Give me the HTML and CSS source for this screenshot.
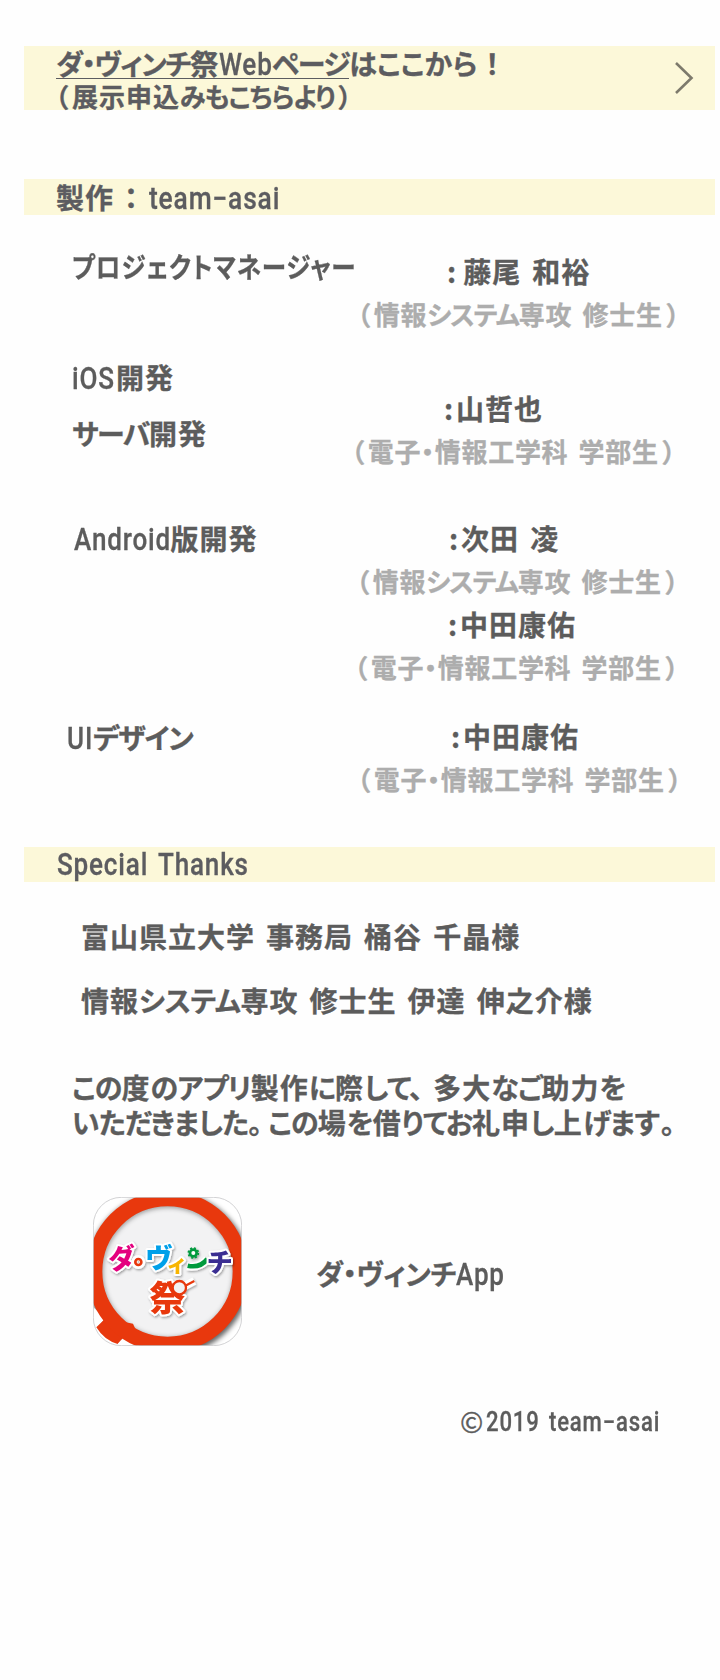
FILE: index.html
```html
<!DOCTYPE html>
<html lang="ja">
<head>
<meta charset="utf-8">
<title>ダ・ヴィンチApp</title>
<link rel="stylesheet" href="styles.css">
</head>
<body>
<main class="page">
  <a class="bar bar-link" href="#">
    <span class="bar-lines">
      <span class="line"><span class="t"><span class="site"><span class="k">ダ・ヴィンチ</span>祭<span class="lat web">Web</span><span class="k">ページ</span></span><span class="here">はここから</span><span class="bang">！</span></span></span>
      <span class="line small"><span class="t"><span class="po">（</span>展示申込<span class="k">みもこちらより</span><span class="pc">）</span></span></span>
    </span>
    <svg class="chevron" viewBox="0 0 20 34" width="20" height="34"><path d="M2 2 L17.500 17 L2 32"/></svg>
  </a>

  <h2 class="bar bar-team"><span class="t">製作<span class="wide-colon">：</span></span><span class="t lat team">team−asai</span></h2>

  <section class="credits">
    <div class="row row-pm">
      <div class="role"><span class="t manager">プロジェクトマネージャー</span></div>
      <div class="people">
        <p class="name n1"><span class="t"><span class="colon">:</span> 藤尾 和裕</span></p>
        <p class="dept d1"><span class="t"><span class="po">（</span>情報<span class="k">システム</span>専攻 修士生<span class="pc">）</span></span></p>
      </div>
    </div>
    <div class="row row-ios">
      <div class="role"><span class="t"><span class="lat ios">iOS</span>開発</span><span class="t"><span class="k">サーバ</span>開発</span></div>
      <div class="people">
        <p class="name n2"><span class="t"><span class="colon">:</span>山哲也</span></p>
        <p class="dept d2"><span class="t"><span class="po">（</span>電子・情報工学科 学部生<span class="pc">）</span></span></p>
      </div>
    </div>
    <div class="row row-android">
      <div class="role"><span class="t role-android"><span class="lat android">Android</span>版開発</span></div>
      <div class="people">
        <p class="name n3"><span class="t"><span class="colon">:</span>次田 凌</span></p>
        <p class="dept d3"><span class="t"><span class="po">（</span>情報<span class="k">システム</span>専攻 修士生<span class="pc">）</span></span></p>
        <p class="name n4"><span class="t"><span class="colon">:</span>中田康佑</span></p>
        <p class="dept d4"><span class="t"><span class="po">（</span>電子・情報工学科 学部生<span class="pc">）</span></span></p>
      </div>
    </div>
    <div class="row row-ui">
      <div class="role"><span class="t role-ui"><span class="lat ui">UI</span><span class="k">デザイン</span></span></div>
      <div class="people">
        <p class="name n5"><span class="t"><span class="colon">:</span>中田康佑</span></p>
        <p class="dept d5"><span class="t"><span class="po">（</span>電子・情報工学科 学部生<span class="pc">）</span></span></p>
      </div>
    </div>
  </section>

  <h2 class="bar bar-thanks"><span class="t lat special">Special Thanks</span></h2>

  <section class="thanks">
    <p><span class="t">富山県立大学 事務局 桶谷 千晶様</span></p>
    <p><span class="t">情報<span class="k-loose">システム</span>専攻 修士生 伊達 伸之介様</span></p>
  </section>

  <section class="note">
    <p><span class="t"><span class="k">この</span>度<span class="k">のアプリ</span>製作<span class="k">に</span>際<span class="k">して<span class="stop">、</span></span>多大<span class="k">なご</span>助力<span class="k">を</span></span></p>
    <p><span class="t"><span class="k">いただきました<span class="stop full">。</span>この</span>場<span class="k">を</span>借<span class="k">りてお</span>礼申<span class="k">し</span>上<span class="k">げます<span class="last">。</span></span></span></p>
  </section>

  <section class="app">
    <svg class="app-icon" viewBox="0 0 447 447" width="149" height="149">
      <defs>
        <clipPath id="tile"><rect x="1" y="1" width="445" height="445" rx="84"/></clipPath>
        <filter id="soft" x="-20%" y="-20%" width="140%" height="140%"><feGaussianBlur stdDeviation="8"/></filter>
        <filter id="drop" x="-20%" y="-20%" width="140%" height="140%"><feDropShadow dx="3" dy="4" stdDeviation="3" flood-color="#000" flood-opacity=".35"/></filter>
      </defs>
      <g clip-path="url(#tile)">
        <rect width="447" height="447" fill="#fff"/>
        <circle cx="227" cy="230" r="222" fill="none" stroke="#000" stroke-opacity=".6" stroke-width="48" filter="url(#soft)"/>
        <circle cx="223" cy="223" r="200" fill="#f2f2f3"/>
        <circle cx="225" cy="227" r="203" fill="none" stroke="#000" stroke-opacity=".45" stroke-width="14" filter="url(#soft)"/>
        <path d="M0 330 L38 364 L8 394 Q34 432 80 447 L0 447 Z" fill="#fff"/>
        <path d="M38 364 L10 391 Q34 430 74 441 L92 421 L150 447 L120 380 Z" fill="#e8380d"/>
        <path d="M92 421 L74 441 L80 447 L140 447 Z" fill="#fff"/>
        <circle cx="223.500" cy="223.500" r="219" fill="none" stroke="#e8380d" stroke-width="47"/>
      </g>
      <g class="logo" filter="url(#drop)">
        <text x="45" y="214" font-size="82" fill="#e4007f" transform="rotate(-5 85 180)">ダ</text>
        <circle class="halo" cx="136" cy="195" r="9"/>
        <circle cx="136" cy="195" r="9" fill="none" stroke="#e8380d" stroke-width="8"/>
        <text x="157" y="213" font-size="82" fill="#00a0e9">ヴ</text>
        <text x="223" y="224" font-size="64" fill="#f8b500">ィ</text>
        <path class="halo" d="M282 208 Q322 214 343 186 M304 166 h1"/>
        <path d="M284 206 Q322 214 343 186" fill="none" stroke="#009a3e" stroke-width="14"/>
        <circle cx="301" cy="168" r="10" fill="#fff" stroke="#009a3e" stroke-width="8"/>
        <circle cx="301" cy="168" r="15" fill="none" stroke="#009a3e" stroke-width="5" stroke-dasharray="6 5.781"/>
        <text x="344" y="224" font-size="78" fill="#3a2f92">チ</text>
        <text x="170" y="341" font-size="106" fill="#e8380d">祭</text>
        <path class="halo" d="M277 266 L304 252"/>
        <circle cx="259" cy="272" r="20" fill="#f2f2f3" stroke="#e8380d" stroke-width="7"/>
        <path d="M277 266 L304 252" stroke="#e8380d" stroke-width="7"/>
      </g>
      <rect x="1" y="1" width="445" height="445" rx="84" fill="none" stroke="#c9c9cb" stroke-width="2.500"/>
    </svg>
    <span class="t app-name"><span class="k-loose">ダ・ヴィンチ</span><span class="lat app-lat">App</span></span>
  </section>

  <footer class="copy"><span class="t copy-mark">©</span><span class="t lat copy-text">2019 team−asai</span></footer>
</main>
</body>
</html>
```
FILE: styles.css
```css
* { box-sizing: border-box; }
body, p, h2 { margin: 0; }
body {
  background: #fefefe;
  color: #5c5c5c;
  font: 700 28px/43px "Noto Sans CJK JP", sans-serif;
  font-feature-settings: "palt";
  letter-spacing: 1px;
  word-spacing: 3.7px;
  -webkit-text-stroke: 0.3px;
}
.page { width: 720px; height: 1680px; padding-top: 46px; overflow: hidden; }
.t { display: inline-block; white-space: pre; transform-origin: 0 50%; }

/* kana runs are set tighter than kanji */
.k { letter-spacing: -1.4px; }
.k-loose { letter-spacing: -0.4px; }
.po { margin-right: 3px; }
.pc { margin-left: 4px; }
.colon { margin-right: 2px; }
.n1 .colon { margin-right: -5px; }
.stop { margin-right: 11px; }
.full { margin-right: 7px; }
.last { margin-left: 2px; }
.here { letter-spacing: .2px; }
.bang { margin-left: 8px; }
.wide-colon { margin: 0 -3px 0 3px; }

.lat {
  display: inline-block;
  font-family: Roboto, sans-serif;
  font-weight: 500;
  font-size: 31px;
  line-height: 1;
  transform: scaleX(.84);
  transform-origin: 0 50%;
}
.web { margin-right: -11px; }
.ios { margin-right: -7px; }
.android { margin-right: -19px; }
.ui { margin-right: -5px; }
.app-lat { margin-right: -9px; }

.bar {
  display: flex;
  margin-left: 24px;
  width: 691px;
  background: #fcf8d9;
  color: #5c5c60;
  font-size: 28px;
  font-weight: 700;
  text-decoration: none;
}
.bar-link { height: 64px; justify-content: space-between; padding: 0 21px 0 32px; }
.bar-lines { display: flex; flex-direction: column; }
.line { display: block; height: 34px; line-height: 34px; }
.site { display: inline-block; height: 33px; border-bottom: 1.5px solid #5c5c60; }
.small { font-size: 26px; margin-top: -1px; }
.small .t { margin-left: -1px; }
.small .k { letter-spacing: -.9px; }
.chevron { margin-top: 15px; fill: none; stroke: #7d7a6c; stroke-width: 2.6; }
.bar-team { height: 36px; margin-top: 69px; padding-left: 32px; line-height: 37px; font-feature-settings: normal; }
.team { margin-left: 6px; line-height: 39px; transform: scaleX(.85); }
.bar-thanks { height: 35px; margin-top: 47px; padding-left: 33px; }
.special { line-height: 36px; }

.credits { padding-top: 30px; }
.row { display: flex; }
.role { display: flex; flex-direction: column; align-items: flex-start; width: 354px; padding-left: 72px; flex: none; }
.row-pm { height: 91px; }
.row-pm .people { padding-top: 4px; }
.row-ios { height: 124px; margin-top: 13px; }
.row-ios .role { line-height: 56px; }
.row-ios .people { padding-top: 37px; }
.row-android { height: 172px; margin-top: 44px; }
.row-ui { height: 85px; margin-top: 26px; }
.row-android .people, .row-ui .people { margin-top: -1px; }
.manager { transform: scaleX(.877); }
.role-android { margin-left: 2px; }
.role-ui { margin: 1px 0 0 -5px; }
.name { padding-top: 1px; }
.n1 { padding-left: 93px; }
.n2 { padding-left: 90px; }
.n3 { padding-left: 95px; }
.n4 { padding-left: 94px; }
.n5 { padding-left: 97px; }
.dept { font-size: 26px; line-height: 41px; margin-bottom: 1px; color: #adadad; letter-spacing: .7px; }
.dept .k { letter-spacing: -1px; }
.d1, .d5 { padding-left: 3px; }
.d2 { margin-left: -3px; }
.d3 { padding-left: 2px; }

.thanks { padding: 22px 0 0 81px; line-height: 64px; }
.note { padding: 38px 0 0 72px; line-height: 35px; }
.note .k { letter-spacing: -.85px; }
.app { display: flex; align-items: center; padding: 57px 0 0 93px; }
.app-name { margin: 4px 0 0 74px; }
.logo text { font-weight: 900; stroke: #fff; stroke-width: 12px; paint-order: stroke; stroke-linejoin: round; }
.halo { fill: none; stroke: #fff; stroke-width: 24px; }
.copy { display: flex; padding: 54px 0 0 460px; font-size: 28px; }
.copy-mark { width: 26px; font-weight: 400; }
.copy-text { font-size: 27px; line-height: 45px; transform: scaleX(.82); }
```
